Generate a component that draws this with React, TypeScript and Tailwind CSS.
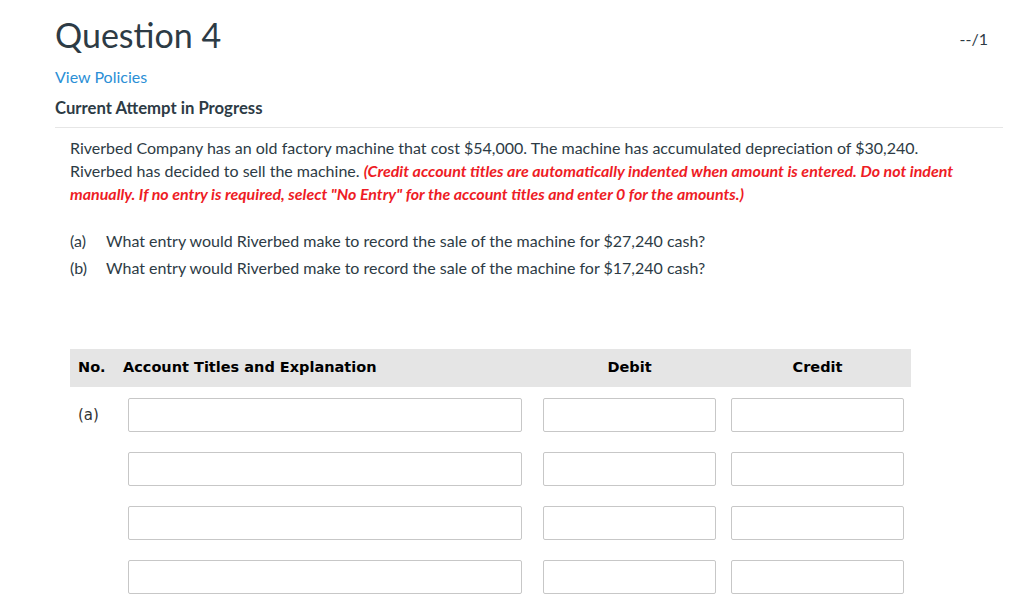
import React from 'react';

const rows = ['(a)', '', '', ''];

const Field: React.FC<{ className: string }> = ({ className }) => (
  <input
    type="text"
    className={`h-[34px] border border-[#c7c7c7] rounded-[2px] bg-white outline-none ${className}`}
  />
);

const App: React.FC = () => {
  return (
    <div className="w-[1024px] h-[601px] overflow-hidden bg-white text-[#2d3b45] font-['Lato',sans-serif]">
      <div className="pl-[55px] pr-[21px] pt-[13px]">
        {/* Header */}
        <div className="flex items-start justify-between">
          <h1 className="text-[34px] leading-[44px] font-normal">Question 4</h1>
          <span className="text-[16px] mt-[14px] mr-[15px]">--/1</span>
        </div>
        <a className="block mt-[10px] text-[16px] leading-[20px] text-[#2b8fd6]">View Policies</a>
        <p className="mt-[11px] text-[16.7px] leading-[20px] font-bold">Current Attempt in Progress</p>
        <div className="mt-[9px] border-t border-[#e6e6e6]" />

        {/* Question body */}
        <div className="pl-[15px] pt-[8px]">
          <p className="text-[16px] leading-[23px] pr-[30px]">
            Riverbed Company has an old factory machine that cost $54,000. The machine has accumulated depreciation of $30,240.
            Riverbed has decided to sell the machine.{' '}
            <em className="font-bold text-[#ee1c25]">
              (Credit account titles are automatically indented when amount is entered. Do not indent manually. If no entry is
              required, select "No Entry" for the account titles and enter 0 for the amounts.)
            </em>
          </p>

          <div className="mt-[22px] text-[16px] leading-[27px]">
            <div className="flex">
              <span className="w-[36px]">(a)</span>
              <span>What entry would Riverbed make to record the sale of the machine for $27,240 cash?</span>
            </div>
            <div className="flex">
              <span className="w-[36px]">(b)</span>
              <span>What entry would Riverbed make to record the sale of the machine for $17,240 cash?</span>
            </div>
          </div>

          {/* Journal table */}
          <div className="mt-[68px] w-[841px] font-['DejaVu_Sans',Verdana,sans-serif] text-black">
            <div className="flex items-center h-[38px] bg-[#e5e5e5] pl-[8px] text-[14.5px] font-bold">
              <span className="w-[45px]">No.</span>
              <span className="w-[399px]">Account Titles and Explanation</span>
              <span className="ml-[21px] w-[173px] text-center">Debit</span>
              <span className="ml-[15px] w-[173px] text-center">Credit</span>
            </div>
            <div className="pt-[11px] flex flex-col gap-[20px]">
              {rows.map((label, i) => (
                <div key={i} className="flex items-center pl-[8px] text-[15px] text-[#333]">
                  <span className="w-[50px]">{label}</span>
                  <Field className="w-[394px]" />
                  <Field className="ml-[21px] w-[173px]" />
                  <Field className="ml-[15px] w-[173px]" />
                </div>
              ))}
            </div>
          </div>
        </div>
      </div>
    </div>
  );
};

export default App;
